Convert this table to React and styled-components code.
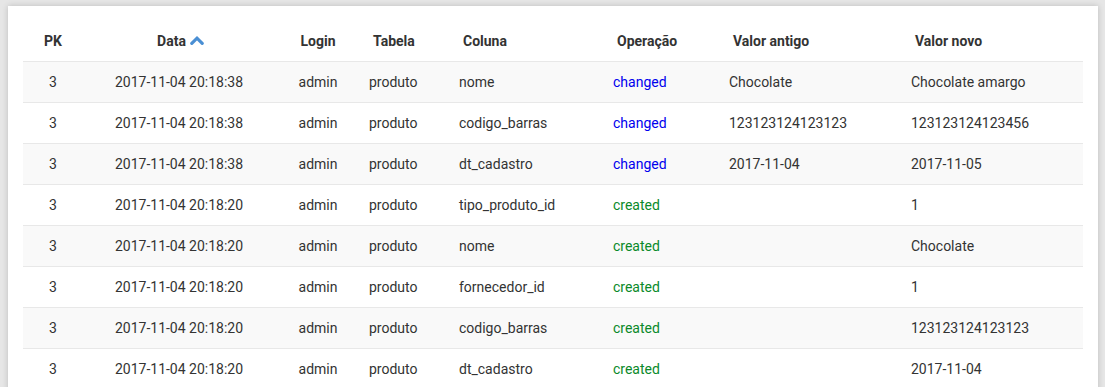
import React from "react";
import styled, { createGlobalStyle } from "styled-components";

const Global = createGlobalStyle`
  html, body { margin: 0; padding: 0; background: #e6e6e6; }
  body { padding: 6px 7px 0 8px; font-family: Roboto, "Open Sans", Arial, sans-serif; }
`;

const Card = styled.div`
  background: #fff;
  box-shadow: 0 0 6px rgba(0, 0, 0, 0.18);
  padding: 15px 15px 0 15px;
  height: 400px;
  box-sizing: border-box;
`;

const Table = styled.table`
  width: 1060px;
  border-collapse: collapse;
  table-layout: fixed;
  font-size: 14px;
  line-height: 20px;
  color: #333;
`;

const Th = styled.th`
  font-weight: 700;
  padding: 10px 8px 10px ${(p) => (p.$align === "left" ? "12px" : "8px")};
  text-align: ${(p) => p.$align};
  white-space: nowrap;
  color: #333;
`;

const Row = styled.tr`
  background: ${(p) => (p.$striped ? "#f9f9f9" : "#fff")};
  border-top: 1px solid #e8e8e8;
`;

const Td = styled.td`
  padding: 10px 8px;
  text-align: ${(p) => p.$align};
  white-space: nowrap;
  color: ${(p) => p.$color || "#333"};
`;

const SortLabel = styled.span`
  display: inline-flex;
  align-items: center;
  gap: 4px;
  padding-left: 3px;
`;

const SortIcon = styled.svg`
  width: 14px;
  height: 10px;
  margin-top: -3px;
`;

const cols = [
  { key: "pk", label: "PK", width: 60, align: "center" },
  { key: "data", label: "Data", width: 192, align: "center", sort: true },
  { key: "login", label: "Login", width: 86, align: "center" },
  { key: "tabela", label: "Tabela", width: 90, align: "left" },
  { key: "coluna", label: "Coluna", width: 154, align: "left" },
  { key: "op", label: "Operação", width: 116, align: "left" },
  { key: "antigo", label: "Valor antigo", width: 182, align: "left" },
  { key: "novo", label: "Valor novo", width: 180, align: "left" },
];

const rows = [
  ["3", "2017-11-04 20:18:38", "admin", "produto", "nome", "changed", "Chocolate", "Chocolate amargo"],
  ["3", "2017-11-04 20:18:38", "admin", "produto", "codigo_barras", "changed", "123123124123123", "123123124123456"],
  ["3", "2017-11-04 20:18:38", "admin", "produto", "dt_cadastro", "changed", "2017-11-04", "2017-11-05"],
  ["3", "2017-11-04 20:18:20", "admin", "produto", "tipo_produto_id", "created", "", "1"],
  ["3", "2017-11-04 20:18:20", "admin", "produto", "nome", "created", "", "Chocolate"],
  ["3", "2017-11-04 20:18:20", "admin", "produto", "fornecedor_id", "created", "", "1"],
  ["3", "2017-11-04 20:18:20", "admin", "produto", "codigo_barras", "created", "", "123123124123123"],
  ["3", "2017-11-04 20:18:20", "admin", "produto", "dt_cadastro", "created", "", "2017-11-04"],
];

const opColor = { changed: "#0000ee", created: "#0a8a2a" };

export default function App() {
  return (
    <>
      <Global />
      <Card>
        <Table>
          <colgroup>
            {cols.map((c) => (
              <col key={c.key} style={{ width: c.width }} />
            ))}
          </colgroup>
          <thead>
            <tr>
              {cols.map((c) => (
                <Th key={c.key} $align={c.align}>
                  {c.sort ? (
                    <SortLabel>
                      {c.label}
                      <SortIcon viewBox="0 0 14 10">
                        <path
                          d="M1.8 8.4 L7 3.2 L12.2 8.4"
                          fill="none"
                          stroke="#4a8fd4"
                          strokeWidth="3.2"
                          strokeLinecap="round"
                          strokeLinejoin="miter"
                        />
                      </SortIcon>
                    </SortLabel>
                  ) : (
                    c.label
                  )}
                </Th>
              ))}
            </tr>
          </thead>
          <tbody>
            {rows.map((r, i) => (
              <Row key={i} $striped={i % 2 === 0}>
                {r.map((v, j) => (
                  <Td
                    key={j}
                    $align={cols[j].align}
                    $color={j === 5 ? opColor[v] : undefined}
                  >
                    {v}
                  </Td>
                ))}
              </Row>
            ))}
          </tbody>
        </Table>
      </Card>
    </>
  );
}
